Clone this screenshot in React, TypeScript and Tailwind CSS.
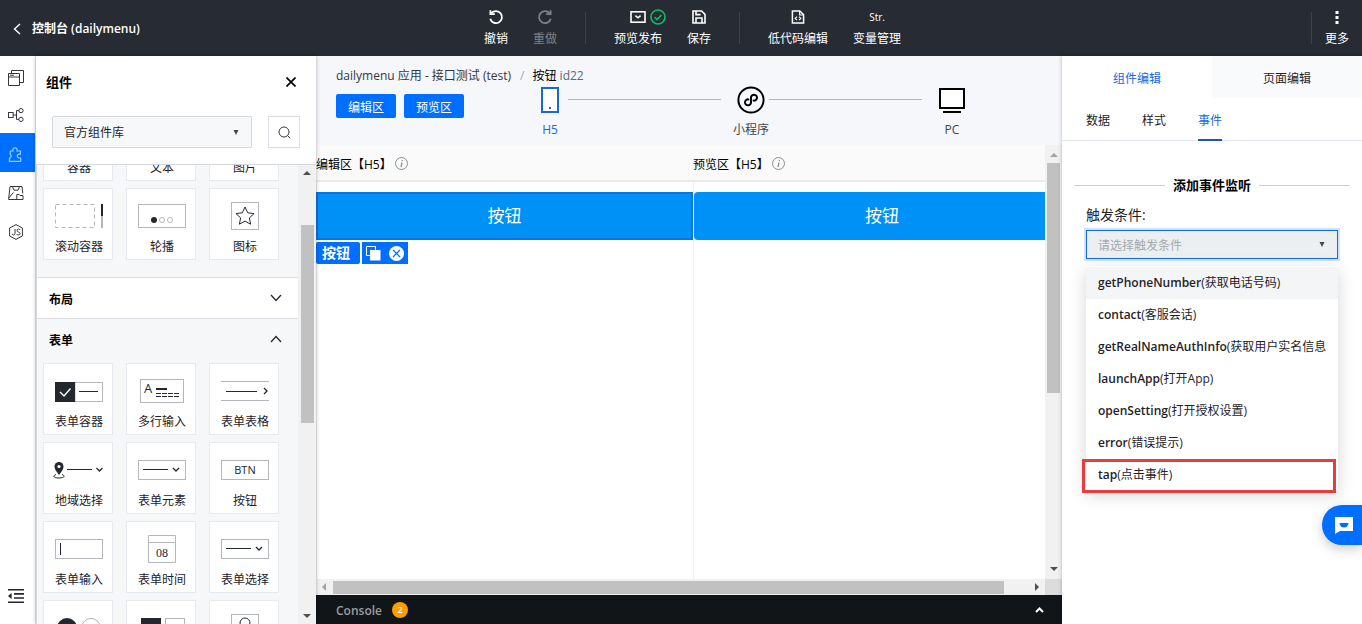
import { useState, type ReactNode } from "react";

const PATH = "fill-none stroke-[#33373d]";

function ToolItem({ label, muted, children }: { label: string; muted?: boolean; children: ReactNode }) {
  return (
    <button type="button" className={`flex flex-col items-center gap-1 text-xs ${muted ? "text-[#7e8288]" : "text-white"}`}>
      <span className="flex h-[18px] items-center gap-1">{children}</span>
      <span className="leading-[18px]">{label}</span>
    </button>
  );
}

function ToolDivider() {
  return <span className="mx-7 h-8 w-px bg-[#3d4249]" />;
}

function TopBar() {
  return (
    <header className="flex h-14 shrink-0 items-center bg-[#272b33] text-white">
      <div className="flex w-[484px] shrink-0 items-center gap-[10px] pt-0.5 pl-3">
        <a href="#" aria-label="返回" className="flex">
          <svg width="10" height="12" viewBox="0 0 10 12" className="fill-none stroke-white" strokeWidth="1.4">
            <path d="M8 1 2.5 6 8 11" />
          </svg>
        </a>
        <h1 className="text-xs font-semibold">控制台 (dailymenu)</h1>
      </div>
      <nav className="flex items-center">
        <div className="flex gap-[25px]">
          <ToolItem label="撤销">
            <svg width="16" height="16" viewBox="0 0 16 16" className="fill-none stroke-current" strokeWidth="1.8">
              <path d="M3.4 4.2a6 6 0 1 1-1.2 5.6" />
              <path d="M2.4 1.2v4h4.4" />
            </svg>
          </ToolItem>
          <ToolItem label="重做" muted>
            <svg width="16" height="16" viewBox="0 0 16 16" className="fill-none stroke-current" strokeWidth="1.8">
              <path d="M12.6 4.2a6 6 0 1 0 1.2 5.6" />
              <path d="M13.6 1.2v4H9.2" />
            </svg>
          </ToolItem>
        </div>
        <ToolDivider />
        <div className="flex gap-[25px]">
          <ToolItem label="预览发布">
            <svg width="16" height="14" viewBox="0 0 16 14" className="fill-none stroke-current" strokeWidth="1.6">
              <rect x="1" y="1.8" width="14" height="10.4" />
              <path d="m5.4 5.6 2.600 2.200 2.600-2.200" />
            </svg>
            <svg width="16" height="16" viewBox="0 0 16 16" className="-mr-5 fill-none stroke-[#0abf6b]" strokeWidth="1.6">
              <circle cx="8" cy="8" r="7" />
              <path d="m4.6 8.2 2.4 2.4 4.4-4.6" />
            </svg>
          </ToolItem>
          <ToolItem label="保存">
            <svg width="14" height="14" viewBox="0 0 14 14" className="fill-none stroke-current" strokeWidth="1.6">
              <path d="M1 1h8.6L13 4.4V13H1z" />
              <path d="M4 1v3.6h4.6M4 13V8h6v5" />
            </svg>
          </ToolItem>
        </div>
        <ToolDivider />
        <div className="flex gap-[25px]">
          <ToolItem label="低代码编辑">
            <svg width="14" height="14" viewBox="0 0 14 14" className="fill-none stroke-current" strokeWidth="1.5">
              <path d="M1.4 1h7.4l3.8 3.8V13H1.4z" />
              <path d="M8.6 1v4h4M6 6.6 4.2 8.4 6 10.2M8 6.6l1.8 1.8L8 10.2" strokeWidth="1.2" />
            </svg>
          </ToolItem>
          <ToolItem label="变量管理">
            <span className="pt-0.5 text-[10px]">Str.</span>
          </ToolItem>
        </div>
      </nav>
      <div className="ml-auto flex h-full items-center gap-[13px] pr-[13px]">
        <span className="h-8 w-px bg-[#3d4249]" />
        <ToolItem label="更多">
          <svg width="4" height="14" viewBox="0 0 4 14" className="fill-current">
            <rect x="0.5" y="1" width="3" height="3" />
            <rect x="0.5" y="6" width="3" height="3" />
            <rect x="0.5" y="11" width="3" height="3" />
          </svg>
        </ToolItem>
      </div>
    </header>
  );
}

function SideRail() {
  return (
    <nav className="flex w-9 shrink-0 flex-col border-r border-[#e5e8ed] bg-white pt-[3px]">
      <button type="button" aria-label="页面" className="flex h-[37px] items-center justify-center pr-1">
        <svg width="16" height="16" viewBox="0 0 16 16" className={PATH}>
          <path d="M.5 3.5h11v12H.5zM.5 7h11M2 5.2h4" />
          <path d="M3.5 3V.5h12v12H12" />
        </svg>
      </button>
      <button type="button" aria-label="流程" className="flex h-[37px] items-center justify-center pr-1">
        <svg width="16" height="14" viewBox="0 0 16 14" className={PATH}>
          <rect x=".5" y="4.5" width="4.6" height="5" />
          <path d="M5 7h3M11 2.6H8.5v8.8H11" />
          <circle cx="13" cy="2.6" r="2.1" />
          <circle cx="13" cy="11.4" r="2.1" />
        </svg>
      </button>
      <button type="button" aria-label="组件" className="flex h-[39px] items-center justify-center bg-[#006eff] pt-1 pr-1">
        <svg width="16" height="16" viewBox="0 0 16 16" className="fill-none stroke-[#8fd0ff]" strokeWidth="1.2">
          <path d="M2 4h3a2.200 2.200 0 1 1 4 0h3.500v3.200h-1.300a1.900 1.900 0 1 0 0 3.800h1.500v3.400H1.500v-3.200a2 2 0 0 0 .8-3.600V4" />
        </svg>
      </button>
      <button type="button" aria-label="素材" className="flex h-[39px] items-center justify-center pt-0.5 pr-1">
        <svg width="16" height="14" viewBox="0 0 16 14" className={PATH}>
          <path d="M9 13.5H.6L2 .5h12l.8 7M4.500.8l1.500 3.400h4L11.500.8M.8 12l4.600-5.500" />
          <path d="M8.8 8.5h2.4l.8 1h3v4H8.8z" />
        </svg>
      </button>
      <button type="button" aria-label="脚本" className="flex h-[39px] items-center justify-center pt-0.5 pr-1">
        <svg width="14" height="16" viewBox="0 0 14 16" className={PATH}>
          <path d="M7 .6 13.4 4v8L7 15.4.6 12V4z" />
          <path d="M6 5v4.6q0 1.4-1.4 1.4T3.4 9.8M11 6Q10.600 5 9.400 5 8 5 8 6.400q0 1.200 1.500 1.600T11 9.600Q11 11 9.400 11 8 11 7.800 9.900" />
        </svg>
      </button>
      <button type="button" aria-label="收起" className="mt-auto flex h-14 items-center justify-center pr-1">
        <svg width="18" height="14" viewBox="0 0 18 14" className="fill-[#22262b] stroke-[#22262b]" strokeWidth="1.6">
          <path d="M1 .8h16M7 4.900h10M7 9h10M1 13.200h16" />
          <path d="M4.600 4v6L1 7z" stroke="none" />
        </svg>
      </button>
    </nav>
  );
}

const frame = "fill-none stroke-[#b4b7bb]";
const dark = "fill-none stroke-[#24282e]";

const icons: Record<string, ReactNode> = {
  滚动容器: (
    <>
      <rect x="6.500" y="5.500" width="39" height="23" strokeDasharray="4 3" className={frame} />
      <path d="M53 5v12" className={dark} strokeWidth="2" />
      <path d="M53 17v12" className={frame} strokeWidth="2" />
    </>
  ),
  轮播: (
    <>
      <rect x="6.5" y="5.5" width="47" height="23" className={frame} />
      <circle cx="22" cy="21" r="3" className="fill-[#24282e]" />
      <circle cx="30" cy="21" r="2.500" className={frame} />
      <circle cx="38" cy="21" r="2.500" className={frame} />
    </>
  ),
  图标: (
    <>
      <rect x="16.5" y="3.5" width="27" height="27" className={frame} />
      <path d="m30 8 2.700 5.800 6.300.8-4.600 4.300 1.200 6.300L30 22.100l-5.600 3.100 1.200-6.300-4.600-4.300 6.300-.8z" className={dark} />
    </>
  ),
  表单容器: (
    <>
      <rect x="26" y="8.5" width="27.500" height="19" className={frame} />
      <rect x="6" y="8" width="20" height="20" className="fill-[#24282e]" />
      <path d="m11 18 4 4 6.500-7.500" className="fill-none stroke-white" strokeWidth="1.400" />
      <path d="M30 17.500h19" className={dark} />
    </>
  ),
  多行输入: (
    <>
      <rect x="8.5" y="5.500" width="43" height="23" className={frame} />
      <text x="12" y="19" fontSize="13" className="fill-[#24282e]">A</text>
      <path d="M24 15h11" className={dark} strokeWidth="2" />
      <path d="M24 19.500h23M24 22.500h23" className={dark} strokeDasharray="5 1" />
    </>
  ),
  表单表格: (
    <>
      <path d="M6 7.500h48M6 26.500h48" className={frame} />
      <path d="M11 17.500h31" className={dark} />
      <path d="m49 14 3 3-3 3" className={dark} strokeWidth="1.300" />
    </>
  ),
  地域选择: (
    <>
      <path d="M10 22c-3-4-4.500-6-4.500-8.500a4.500 4.500 0 0 1 9 0C14.500 16 13 18 10 22z" className="fill-[#24282e]" />
      <circle cx="10" cy="13.500" r="1.600" className="fill-white" />
      <path d="M7 21.500c-4 1.600-2 3.500 3 3.500s7-1.900 3-3.500" className={dark} />
      <path d="M18 16.500h25" className={dark} />
      <path d="m47.500 15 3 3 3-3" className={dark} strokeWidth="1.300" />
    </>
  ),
  表单元素: (
    <>
      <rect x="6.5" y="7.500" width="47" height="19" className={frame} />
      <path d="M11 16.500h25" className={dark} />
      <path d="m41 15 3 3 3-3" className={dark} strokeWidth="1.300" />
    </>
  ),
  按钮: (
    <>
      <rect x="6.5" y="7.500" width="47" height="19" className={frame} />
      <text x="30" y="21" fontSize="11" textAnchor="middle" className="fill-[#24282e] font-medium">BTN</text>
    </>
  ),
  表单输入: (
    <>
      <rect x="6.5" y="7.500" width="47" height="19" className={frame} />
      <path d="M11.500 11v12" className={dark} />
    </>
  ),
  表单时间: (
    <>
      <path d="M16.500 3.500h27v27h-27zM16.500 10.500h27" className={frame} />
      <text x="30" y="25" fontSize="12" textAnchor="middle" className="fill-[#24282e] font-['Liberation_Serif',serif]">08</text>
    </>
  ),
  switch: (
    <>
      <circle cx="18" cy="17" r="10" className="fill-[#24282e]" />
      <circle cx="42" cy="17" r="9.500" className={frame} />
    </>
  ),
  blocks: (
    <>
      <rect x="9" y="7" width="20" height="20" className="fill-[#24282e]" />
      <rect x="33.500" y="7.500" width="19" height="19" className={frame} />
    </>
  ),
  user: (
    <>
      <rect x="16.500" y="3.500" width="27" height="27" className={frame} />
      <circle cx="30" cy="12" r="5" className={dark} />
    </>
  ),
};
icons["表单选择"] = icons["表单元素"];

function ComponentCard({ icon, label }: { icon?: string; label?: string }) {
  return (
    <li className="flex h-[72px] w-[70px] flex-col items-center border border-[#e6e9ed] bg-white pt-[10px] pl-0.5">
      <svg width="60" height="34" viewBox="0 0 60 34">
        {icon ? icons[icon] : null}
      </svg>
      {label && <span className="mt-1 text-xs leading-5 text-[#1f2328]">{label}</span>}
    </li>
  );
}

const CARD_GRID = "flex flex-wrap gap-x-[13px] gap-y-[7px] pl-[6px]";

const formCards = ["表单容器", "多行输入", "表单表格", "地域选择", "表单元素", "按钮", "表单输入", "表单时间", "表单选择"];

function Triangle({ className, d }: { className: string; d: string }) {
  return (
    <svg width="8" height="8" viewBox="0 0 8 8" className={className}>
      <path d={d} />
    </svg>
  );
}

function ComponentPanel() {
  return (
    <aside className="z-10 flex w-[280px] shrink-0 flex-col bg-white shadow-[0_0_4px_rgba(0,0,0,0.3)]">
      <div className="flex items-center justify-between pt-4 pr-5 pl-[10px]">
        <h2 className="text-[13px] leading-5 font-semibold text-black">组件</h2>
        <button type="button" aria-label="关闭" className="flex">
          <svg width="10" height="10" viewBox="0 0 10 10" className="stroke-black" strokeWidth="1.700">
            <path d="m.5.5 9 9M9.500.5l-9 9" />
          </svg>
        </button>
      </div>
      <div className="flex items-center gap-4 px-4 pt-6 pb-4">
        <div className="relative flex-1">
          <select aria-label="组件库" className="h-8 w-full appearance-none rounded-xs border border-[#d5d9de] bg-[#f7f8f9] pt-0.5 pl-[11px] text-xs text-[#1f2328]">
            <option>官方组件库</option>
          </select>
          <Triangle className="pointer-events-none absolute top-3 right-3 fill-[#44484e]" d="M1.500 2h5L4 7z" />
        </div>
        <button type="button" aria-label="搜索" className="flex size-8 items-center justify-center border border-[#dcdfe3]">
          <svg width="13" height="13" viewBox="0 0 13 13" className={PATH}>
            <circle cx="6" cy="6" r="5" />
            <path d="m9.600 9.600 2.600 2.600" />
          </svg>
        </button>
      </div>

      <div className="flex min-h-0 flex-1 border-t border-l border-[#d5d9de] bg-[#f6f7f9]">
        <div className="min-w-0 flex-1 overflow-hidden">
          <ul className={`${CARD_GRID} -mt-14 pb-[17px]`}>
            <ComponentCard label="容器" />
            <ComponentCard label="文本" />
            <ComponentCard label="图片" />
            <ComponentCard icon="滚动容器" label="滚动容器" />
            <ComponentCard icon="轮播" label="轮播" />
            <ComponentCard icon="图标" label="图标" />
          </ul>
          <button type="button" className="flex h-[42px] w-full items-center justify-between border-y border-[#dcdfe3] bg-white pr-4 pl-3">
            <span className="pt-1 text-xs font-semibold">布局</span>
            <svg width="12" height="8" viewBox="0 0 12 8" className={dark} strokeWidth="1.300">
              <path d="m1 1 5 5.500L11 1" />
            </svg>
          </button>
          <button type="button" className="flex h-11 w-full items-center justify-between pr-4 pb-1 pl-3">
            <span className="pt-1 text-xs font-semibold">表单</span>
            <svg width="12" height="8" viewBox="0 0 12 8" className={dark} strokeWidth="1.300">
              <path d="m1 7 5-5.500L11 7" />
            </svg>
          </button>
          <ul className={CARD_GRID}>
            {formCards.map((name) => (
              <ComponentCard key={name} icon={name} label={name} />
            ))}
            <ComponentCard icon="switch" />
            <ComponentCard icon="blocks" />
            <ComponentCard icon="user" />
          </ul>
        </div>
        <div className="flex w-[18px] shrink-0 flex-col items-center justify-between bg-[#f1f1f1] py-1">
          <Triangle className="fill-[#4f4f4f]" d="M0 6h8L4 2z" />
          <div className="mt-12 mb-auto h-[198px] w-[13px] bg-[#c1c1c1]" />
          <Triangle className="fill-[#4f4f4f]" d="M0 2h8L4 6z" />
        </div>
      </div>
    </aside>
  );
}

function Device({ label, width, active, children }: { label: string; width: string; active?: boolean; children: ReactNode }) {
  return (
    <button type="button" className={`flex ${width} shrink-0 flex-col items-center gap-1 text-xs whitespace-nowrap ${active ? "text-[#1668dc]" : "text-[#3f444b]"}`}>
      <span className="flex h-[28px] items-center">{children}</span>
      <span className="leading-6">{label}</span>
    </button>
  );
}

function Pane({ title, children }: { title: string; children: ReactNode }) {
  return (
    <section className="flex w-[377px] shrink-0 flex-col">
      <div className="flex h-[37px] items-center gap-[3px] border-b-2 border-[#e9eaec] bg-[#fafafa]">
        <h3 className="pt-1 text-xs text-black">{title}</h3>
        <svg width="13" height="13" viewBox="0 0 13 13" className="mt-0.5 fill-none stroke-[#8b8f95]">
          <circle cx="6.500" cy="6.500" r="6" />
          <path d="m7 5.500-1 4.500M7.400 3l-.2 1" strokeWidth="1.300" />
        </svg>
      </div>
      <div className="flex-1 border-l border-[#f0f1f2] bg-white">{children}</div>
    </section>
  );
}

function Workspace() {
  return (
    <main className="flex min-w-0 flex-1 flex-col bg-[#f6f7fa]">
      <p className="flex h-[30px] items-end pl-5 text-xs leading-5 text-[#33383f]">
        <span>dailymenu 应用 - 接口测试 (test)</span>
        <span className="mr-2 ml-[9px] text-[#a3a8ae]">/</span>
        <span className="text-black">
          按钮 <span className="text-[#5d6873]">id22</span>
        </span>
      </p>
      <div className="flex h-[59px] pr-24 pl-5">
        <div className="mt-2 flex shrink-0 gap-2">
          <button type="button" className="h-6 w-[60px] rounded-xs bg-[#006eff] pt-1 text-xs leading-5 text-white">编辑区</button>
          <button type="button" className="h-6 w-[60px] rounded-xs bg-[#006eff] pt-1 text-xs leading-5 text-white">预览区</button>
        </div>
        <div className="ml-[76px] flex flex-1 items-start">
          <Device label="H5" width="w-5" active>
            <svg width="18" height="26" viewBox="0 0 18 26" className="fill-white stroke-[#1668dc]" strokeWidth="2">
              <rect x="1" y="1" width="16" height="24" />
              <path d="M8 21h2" />
            </svg>
          </Device>
          <span className="mt-[13px] mr-3 ml-2 h-px flex-1 bg-[#b3b8bd]" />
          <Device label="小程序" width="w-9">
            <svg width="28" height="28" viewBox="0 0 28 28" className="fill-none stroke-black" strokeWidth="2">
              <circle cx="14" cy="14" r="12.600" />
              <path d="M11.400 13.400a3 3 0 1 0 2.600 3v-4.800a3 3 0 1 1 2.600 3" strokeLinecap="round" />
            </svg>
          </Device>
          <span className="mt-[13px] mr-4 h-px flex-1 bg-[#b3b8bd]" />
          <Device label="PC" width="w-7">
            <svg width="26" height="26" viewBox="0 0 26 26" className="fill-white stroke-black" strokeWidth="2">
              <rect x="1" y="2" width="24" height="19" />
              <path d="M4 25h18" />
            </svg>
          </Device>
        </div>
      </div>

      <div className="flex min-h-0 flex-1">
        <div className="flex min-w-0 flex-1 overflow-hidden bg-white">
          <Pane title="编辑区【H5】">
            <div className="-ml-px pt-[10px]">
              <button type="button" className="h-12 w-full border-2 border-[#0a73e8] bg-[#0091f7] text-[17px] text-white">按钮</button>
              <div className="mt-0.5 flex gap-0.5">
                <span className="flex h-[22px] w-11 items-center rounded-xs bg-[#006eff] pl-[6px] text-sm font-semibold text-white">按钮</span>
                <div className="flex h-[22px] items-center gap-2 bg-[#006eff] px-1">
                  <button type="button" aria-label="复制">
                    <svg width="15" height="15" viewBox="0 0 15 15" className="fill-none stroke-white">
                      <path d="M4 9.500H.5v-9h9V4" />
                      <rect x="4.500" y="4.500" width="9.500" height="9.500" className="fill-white" />
                    </svg>
                  </button>
                  <button type="button" aria-label="删除">
                    <svg width="15" height="15" viewBox="0 0 15 15">
                      <circle cx="7.500" cy="7.500" r="7.500" className="fill-white" />
                      <path d="m4 4 7 7M11 4l-7 7" className="stroke-[#006eff]" strokeWidth="1.200" />
                    </svg>
                  </button>
                </div>
              </div>
            </div>
          </Pane>
          <Pane title="预览区【H5】">
            <div className="pt-[10px]">
              <button type="button" className="h-12 w-full rounded-sm bg-[#0091f7] text-[17px] text-white">按钮</button>
            </div>
          </Pane>
        </div>
        <div className="flex w-[17px] shrink-0 flex-col items-center bg-[#f1f1f1] py-1.5">
          <Triangle className="fill-[#a3a3a3]" d="M0 6h8L4 2z" />
          <div className="mt-1 mb-auto h-[230px] w-[13px] bg-[#c1c1c1]" />
          <Triangle className="fill-[#4f4f4f]" d="M0 2h8L4 6z" />
        </div>
      </div>
      <div className="flex h-4 shrink-0 bg-[#f1f1f1]">
        <div className="flex min-w-0 flex-1 items-center justify-between px-1">
          <Triangle className="fill-[#a3a3a3]" d="M6 0v8L2 4z" />
          <div className="mr-auto ml-[5px] h-[13px] w-[93%] bg-[#c1c1c1]" />
          <Triangle className="fill-[#4f4f4f]" d="M2 0v8l4-4z" />
        </div>
        <div className="w-[17px] bg-[#dcdcdc]" />
      </div>
      <div className="flex h-[29px] shrink-0 items-center bg-[#121518] pr-[18px] pl-5">
        <span className="pt-0.5 text-xs font-semibold text-[#9a9da1]">Console</span>
        <span className="ml-[10px] flex size-4 items-center justify-center rounded-full bg-[#ff9c00] text-[9px] font-semibold text-white">2</span>
        <button type="button" aria-label="展开" className="ml-auto">
          <svg width="9" height="6" viewBox="0 0 9 6" className="fill-none stroke-white" strokeWidth="2">
            <path d="m1 5 3.500-3.500L8 5" />
          </svg>
        </button>
      </div>
    </main>
  );
}

const events = [
  { name: "getPhoneNumber", desc: "(获取电话号码)" },
  { name: "contact", desc: "(客服会话)" },
  { name: "getRealNameAuthInfo", desc: "(获取用户实名信息)" },
  { name: "launchApp", desc: "(打开App)" },
  { name: "openSetting", desc: "(打开授权设置)" },
  { name: "error", desc: "(错误提示)" },
  { name: "tap", desc: "(点击事件)" },
];

function Inspector() {
  const [hovered, setHovered] = useState("getPhoneNumber");

  return (
    <aside className="z-10 w-[300px] shrink-0 bg-white text-xs text-[#1f2328] shadow-[0_0_4px_rgba(0,0,0,0.25)]">
      <div className="grid h-[42px] grid-cols-2">
        <button type="button" className="pt-1 text-[#1668dc]">组件编辑</button>
        <button type="button" className="bg-[#f9fafb] pt-1">页面编辑</button>
      </div>
      <div className="flex h-[43px] gap-8 border-b border-[#e3e6ea] pl-6">
        <button type="button" className="pt-1">数据</button>
        <button type="button" className="pt-1">样式</button>
        <button type="button" className="-mb-px border-b-2 border-[#1a56b8] pt-1 text-[#1668dc]">事件</button>
      </div>
      <div className="mt-[34px] flex items-center gap-2 px-3">
        <span className="h-px flex-1 bg-[#ccd0d5]" />
        <h2 className="text-[13px] leading-5 font-semibold text-black">添加事件监听</h2>
        <span className="h-px flex-1 bg-[#ccd0d5]" />
      </div>
      <div className="px-6 pt-[10px]">
        <label htmlFor="trigger" className="block text-sm leading-5">触发条件:</label>
        <div className="relative mt-[5px]">
          <select id="trigger" defaultValue="" className="block h-[29px] w-full appearance-none border border-[#1668dc] bg-[#ebeff2] pt-0.5 pl-[11px] text-xs text-[#a5a9ae] ring-2 ring-[#cce2ff]">
            <option value="">请选择触发条件</option>
          </select>
          <Triangle className="pointer-events-none absolute top-[10px] right-3 fill-[#44484e]" d="M1.500 2h5L4 7z" />
          <ul className="absolute inset-x-0 top-9 bg-white pt-px shadow-[0_4px_16px_rgba(0,0,0,0.16)]">
            {events.map(({ name, desc }) => (
              <li key={name} onMouseEnter={() => setHovered(name)} className={`relative h-8 px-3 leading-8 ${hovered === name ? "bg-[#f4f5f6]" : ""}`}>
                <div className="overflow-hidden whitespace-nowrap">
                  <b className="font-semibold">{name}</b>
                  {desc}
                </div>
                {name === "tap" && <span className="absolute top-0 right-0.5 -bottom-0.5 -left-1 border-3 border-[#e83c3f]" />}
              </li>
            ))}
          </ul>
        </div>
      </div>
    </aside>
  );
}

export default function App() {
  return (
    <div className="relative flex h-screen flex-col overflow-hidden bg-white font-['Open_Sans','Noto_Sans_CJK_SC',sans-serif] text-xs">
      <TopBar />
      <div className="flex min-h-0 flex-1">
        <SideRail />
        <ComponentPanel />
        <Workspace />
        <Inspector />
      </div>
      <button type="button" aria-label="客服" className="absolute right-0 bottom-[79px] z-20 flex h-10 w-10 items-center rounded-l-full bg-[#006eff] pl-[13px] shadow-[0_4px_12px_rgba(0,0,0,0.2)]">
        <svg width="18" height="18" viewBox="0 0 18 18">
          <path d="M0 1h18v14H5l-5 3z" className="fill-white" />
          <path d="M4.500 7h9a4.500 4.500 0 0 1-9 0z" className="fill-[#006eff]" />
        </svg>
      </button>
    </div>
  );
}
